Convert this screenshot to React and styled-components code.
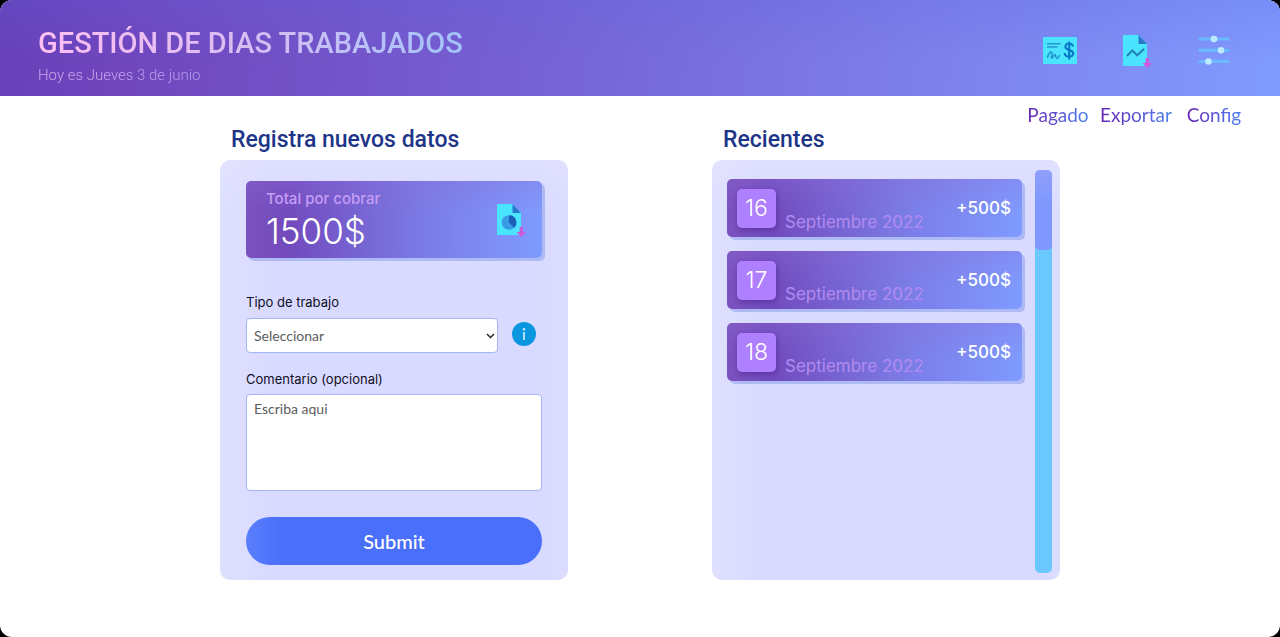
import React from "react";
import styled, { createGlobalStyle } from "styled-components";

const round = '"Lato", "Open Sans", sans-serif';
const body = '"Inter", "Open Sans", sans-serif';
const display = '"Roboto", "Open Sans", sans-serif';

const GlobalStyle = createGlobalStyle`
  *, *::before, *::after { box-sizing: border-box; }
  body { margin: 0; background: #000; font-family: ${body}; }
  h1, h2, p, ul { margin: 0; padding: 0; }
  ul { list-style: none; }
`;

const Page = styled.div`
  min-height: 100vh;
  background: #fff;
  border-radius: 12px;
  overflow: hidden;
`;

const Header = styled.header`
  display: flex;
  justify-content: space-between;
  align-items: flex-start;
  padding: 24px 27px 0 38px;
  background:
    linear-gradient(to bottom, rgba(90, 100, 225, 0.22), rgba(90, 100, 225, 0) 60px) no-repeat top / 100% 96px,
    linear-gradient(95deg, #6740b8 0%, #7046bd 10%, #7560d2 40%, #7e82ec 75%, #809bff 100%) no-repeat top / 100% 96px;
`;

const Title = styled.h1`
  font: 500 29px/38px ${display};
  color: transparent;
  background: linear-gradient(to right, #ffc0f2, #dcbdf2 45%, #a3c3fa);
  background-clip: text;
`;

const Today = styled.p`
  font: 300 15px/26px ${display};
  color: transparent;
  background: linear-gradient(to right, #d9aef2, #b79eec 170px);
  background-clip: text;
`;

const Nav = styled.nav`
  display: grid;
  grid-template-columns: repeat(3, 78px);
`;

const NavLink = styled.a`
  display: flex;
  flex-direction: column;
  align-items: center;
  gap: 32px;
  padding-top: 6px;
  text-decoration: none;
  svg { display: block; height: 40px; }
`;

const NavLabel = styled.span`
  font: 400 19px/26px ${round};
  color: transparent;
  background: linear-gradient(to right, #6a25b8, #4a80ee);
  background-clip: text;
`;

const Main = styled.main`
  display: grid;
  grid-template-columns: repeat(2, minmax(300px, 348px));
  justify-content: center;
  gap: 144px;
  padding-bottom: 56px;
`;

const Column = styled.section`
  display: flex;
  flex-direction: column;
`;

const Heading = styled.h2`
  padding: 0 11px 8px;
  font: 500 23px/24px ${display};
  color: #1d3588;
`;

const Panel = styled.div`
  flex: 1;
  border-radius: 10px;
  background:
    linear-gradient(to bottom, rgba(230, 230, 255, 0.5), rgba(230, 230, 255, 0) 50px),
    linear-gradient(to right, #dfe0ff, #d9daff 14%, #d9daff 92%, #dcdcff);
`;

const Form = styled(Panel).attrs({ as: "form" })`
  display: flex;
  flex-direction: column;
  padding: 21px 26px 15px;
`;

const Tile = styled.div`
  display: flex;
  align-items: center;
  border-radius: 5px;
  box-shadow: 3px 3px 0 #adbaf3;
  background:
    linear-gradient(to bottom, rgba(140, 110, 215, 0.3), rgba(140, 110, 215, 0) 32px),
    linear-gradient(to right, #7b52bd, #724abd 14%, #7b7be6 60%, #7f9bff);
`;

const TotalTile = styled(Tile)`
  justify-content: space-between;
  height: 77px;
  padding: 2px 14px 0 20px;
  margin-bottom: 34px;
`;

const TotalLabel = styled.p`
  font: 500 15px/20px ${body};
  color: #c69df5;
`;

const TotalValue = styled.p`
  font: 300 35px/44px ${body};
  color: #fff;
`;

const Label = styled.label`
  font: 400 13px/20px ${body};
  color: #10101f;
`;

const fieldStyle = `
  border: 1px solid #a3b5f8;
  border-radius: 4px;
  background: #fff;
  color: #5c5c5c;
  font: 400 14px/18px ${round};
`;

const SelectRow = styled.div`
  display: flex;
  align-items: flex-start;
  gap: 14px;
  margin: 6px 0 16px;
`;

const SelectWrap = styled.div`
  position: relative;
  flex: 0 1 252px;
  svg { position: absolute; right: 3px; top: 14px; pointer-events: none; }
`;

const Select = styled.select`
  ${fieldStyle}
  display: block;
  width: 100%;
  height: 35px;
  padding: 0 7px;
  appearance: none;
`;

const InfoButton = styled.button`
  display: block;
  width: 24px;
  height: 24px;
  margin-top: 4px;
  padding: 0;
  border: 0;
  background: none;
  svg { display: block; }
`;

const TextArea = styled.textarea`
  ${fieldStyle}
  display: block;
  height: 97px;
  margin: 5px 0 26px;
  padding: 5px 7px;
  resize: none;
  &::placeholder { color: #5c5c5c; opacity: 1; }
`;

const Submit = styled.button`
  height: 48px;
  border: 0;
  border-radius: 24px;
  background: linear-gradient(to right, #5a7efc, #4a70fb 12%);
  color: #fff;
  font: 500 20px/24px ${round};
`;

const RecentPanel = styled(Panel)`
  display: flex;
  gap: 13px;
  padding: 10px 8px 7px 15px;
`;

const RecentList = styled.ul`
  flex: 1;
  display: flex;
  flex-direction: column;
  gap: 14px;
  padding-top: 9px;
`;

const RecentTile = styled(Tile).attrs({ as: "li" })`
  height: 58px;
  padding: 0 11px 0 10px;
`;

const Day = styled.span`
  width: 39px;
  height: 39px;
  border-radius: 5px;
  background: #ae80ff;
  box-shadow: 1px 2px 5px rgba(70, 30, 140, 0.5);
  color: #fff;
  font: 300 23px/39px ${body};
  text-align: center;
`;

const Month = styled.span`
  flex: 1;
  align-self: flex-end;
  padding: 0 0 3px 9px;
  font: 400 17px/24px ${body};
  color: #b18cf0;
`;

const Amount = styled.span`
  font: 500 17px/24px ${body};
  color: #fff;
`;

const Track = styled.div`
  width: 17px;
  border-radius: 5px;
  background: #6ac8ff;
`;

const Thumb = styled.div`
  height: 80px;
  border-radius: 5px;
  background: linear-gradient(to bottom, #8f9ffa, #8098fd 40%);
`;

const ChequeIcon = () => (
  <svg width="40" height="40" viewBox="0 0 40 40" fill="none" aria-hidden="true">
    <path d="M5 7h34v27H5z" fill="#4be4ff" />
    <path d="M9 13.700h13.500M9 17h10.500" stroke="#2796cf" strokeWidth="1.600" />
    <path d="M9.500 28c.5-5 4-7.500 4.500-5 .5 2-1.500 5 0 5 1.200 0 1.500-3.500 3-3.500 1 0 .5 4 2 4s1.500-3 3-3" stroke="#2190cb" strokeWidth="1.400" />
    <path d="M35 16.500c-.6-4-7.600-4-7.600 0 0 4.500 7.900 2.600 7.900 7 0 4.300-8.300 4.300-8.600-.5M31.200 11.500v18" stroke="#0878c5" strokeWidth="2.100" />
  </svg>
);

const FileBase = ({ children }) => (
  <>
    <path d="M3 2h15.500l8.500 8.500V33H3z" fill="#4be4ff" />
    <path d="M18.500 2l8.500 9h-8.500z" fill="#2878cb" />
    {children}
    <path d="M25.600 25h3.200v5h3.200l-4.800 5-4.800-5h3.200z" fill="#d057dc" />
  </>
);

const ExportIcon = () => (
  <svg width="30" height="40" viewBox="1 -3 30 40" fill="none" overflow="visible" aria-hidden="true">
    <FileBase>
      <path d="M7 23l5.200-5.500 5 4.800 7-6.500" stroke="#2383ba" strokeWidth="2" />
    </FileBase>
  </svg>
);

const ReportIcon = () => (
  <svg width="34" height="38" viewBox="0 0 34 38" fill="none" aria-hidden="true">
    <FileBase>
      <circle cx="15" cy="20.500" r="7.300" fill="#3a9be5" />
      <path d="M15 20.500v-7.300a7.300 7.300 0 0 1 5.200 12.500z" fill="#1d5fb8" />
    </FileBase>
  </svg>
);

const SlidersIcon = () => (
  <svg width="32" height="40" viewBox="0 0 32 40" aria-hidden="true">
    <path d="M2 9h28M2 20.300h28M2 31.500h28" stroke="#6abaff" strokeWidth="3.200" strokeLinecap="round" />
    <g fill="#bdeaff">
      <circle cx="16" cy="9" r="3.300" />
      <circle cx="23" cy="20.300" r="3.300" />
      <circle cx="10.500" cy="31.500" r="3.300" />
    </g>
  </svg>
);

const InfoIcon = () => (
  <svg width="24" height="24" viewBox="0 0 24 24" aria-hidden="true">
    <circle cx="12" cy="12" r="12" fill="#0a97e0" />
    <circle cx="12" cy="7.200" r="1.200" fill="#c9ecff" />
    <path d="M12 10v8" stroke="#c9ecff" strokeWidth="1.700" />
  </svg>
);

const links = [
  { label: "Pagado", Icon: ChequeIcon },
  { label: "Exportar", Icon: ExportIcon },
  { label: "Config", Icon: SlidersIcon },
];

const recents = [16, 17, 18];

export default function App() {
  return (
    <Page>
      <GlobalStyle />
      <Header>
        <div>
          <Title>GESTIÓN DE DIAS TRABAJADOS</Title>
          <Today>Hoy es Jueves 3 de junio</Today>
        </div>
        <Nav>
          {links.map(({ label, Icon }) => (
            <NavLink href="#" key={label}>
              <Icon />
              <NavLabel>{label}</NavLabel>
            </NavLink>
          ))}
        </Nav>
      </Header>
      <Main>
        <Column>
          <Heading>Registra nuevos datos</Heading>
          <Form>
            <TotalTile>
              <div>
                <TotalLabel>Total por cobrar</TotalLabel>
                <TotalValue>1500$</TotalValue>
              </div>
              <ReportIcon />
            </TotalTile>
            <Label htmlFor="tipo">Tipo de trabajo</Label>
            <SelectRow>
              <SelectWrap>
                <Select id="tipo">
                  <option>Seleccionar</option>
                </Select>
                <svg width="9" height="8" viewBox="0 0 9 8" fill="none" aria-hidden="true">
                  <path d="M1 2l3.500 3.500L8 2" stroke="#222" strokeWidth="1.400" />
                </svg>
              </SelectWrap>
              <InfoButton type="button" aria-label="Información">
                <InfoIcon />
              </InfoButton>
            </SelectRow>
            <Label htmlFor="comentario">Comentario (opcional)</Label>
            <TextArea id="comentario" placeholder="Escriba aqui" />
            <Submit type="button">Submit</Submit>
          </Form>
        </Column>
        <Column>
          <Heading>Recientes</Heading>
          <RecentPanel>
            <RecentList>
              {recents.map((day) => (
                <RecentTile key={day}>
                  <Day>{day}</Day>
                  <Month>Septiembre 2022</Month>
                  <Amount>+500$</Amount>
                </RecentTile>
              ))}
            </RecentList>
            <Track>
              <Thumb />
            </Track>
          </RecentPanel>
        </Column>
      </Main>
    </Page>
  );
}
